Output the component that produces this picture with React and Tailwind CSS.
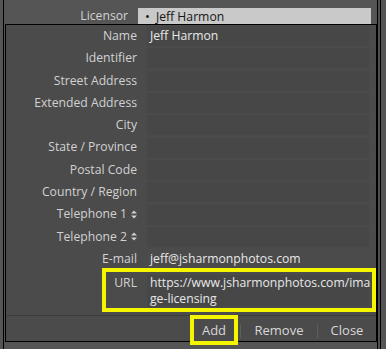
import React from 'react';

const rows = [
  { label: 'Name', value: 'Jeff Harmon' },
  { label: 'Identifier' },
  { label: 'Street Address' },
  { label: 'Extended Address' },
  { label: 'City' },
  { label: 'State / Province' },
  { label: 'Postal Code' },
  { label: 'Country / Region' },
  { label: 'Telephone 1', sort: true },
  { label: 'Telephone 2', sort: true },
  { label: 'E-mail', value: 'jeff@jsharmonphotos.com', plain: true },
];

function SortArrows() {
  return (
    <svg width="6" height="9" viewBox="0 0 6 9" className="ml-[4px] inline-block">
      <path d="M0 3.5 L3 0.5 L6 3.5 Z" fill="#cfcfcf" />
      <path d="M0 5.5 L3 8.5 L6 5.5 Z" fill="#cfcfcf" />
    </svg>
  );
}

function Row({ label, value, sort, plain }) {
  return (
    <div className="flex h-[22.3px] items-center">
      <div className="w-[131px] flex items-center justify-end text-[#d2d2d2]">
        {label}
        {sort && <SortArrows />}
      </div>
      <div
        className={
          'ml-[10px] w-[222px] h-[20px] flex items-center pl-[3px] text-[#e8e8e8] ' +
          (plain ? '' : 'bg-[#474747]')
        }
      >
        {value}
      </div>
    </div>
  );
}

export default function App() {
  return (
    <div
      className="w-[386px] h-[349px] bg-[#555555] flex text-[12.2px] overflow-hidden"
      style={{ fontFamily: '"Open Sans", "Noto Sans", Arial, sans-serif' }}
    >
      <div className="w-[3px]" />
      <div className="w-[1px] bg-black" />
      <div className="w-[373px] flex flex-col">
        <div className="h-[20px] mt-[4px] flex items-start pt-[4px]">
          <div className="w-[124px] text-right text-[#d2d2d2] leading-[15px]">Licensor</div>
          <div className="ml-[10px] w-[233px] h-[16px] bg-[#c9c9c9] flex items-center text-[#161616] leading-[15px]">
            <span className="ml-[7px] text-[13px]">•</span>
            <span className="ml-[6px]">Jeff Harmon</span>
          </div>
        </div>
        <div className="ml-[1px] h-[318px] border border-black bg-[#4b4b4b] flex flex-col">
          <div>
            {rows.map((r) => (
              <Row key={r.label} {...r} />
            ))}
          </div>
          <div className="ml-[96px] w-[274px] mt-[-2px] border-[4px] border-[#f5f500] flex pt-[3px] pb-[1px] bg-[#4b4b4b]">
            <div className="w-[31px] text-right text-[#d2d2d2] leading-[16px]">URL</div>
            <div className="ml-[10px] w-[222px] bg-[#474747] pl-[3px] text-[#e8e8e8] leading-[16px]">
              https://www.jsharmonphotos.com/ima
              <br />
              ge-licensing
            </div>
          </div>
          <div className="mt-[3px] border-t border-[#3c3c3c] flex-1 flex items-start">
            <div className="ml-[184px] mt-[-1px] w-[48px] h-[30px] border-[4px] border-[#f5f500] flex items-center justify-center text-[#d8d8d8] text-[13px]">
              Add
            </div>
            <div className="ml-[2px] mt-[8px] w-px h-[14px] bg-[#5e5e5e]" />
            <div className="w-[76px] h-[28px] flex items-center justify-center text-[#d8d8d8] text-[13px]">Remove</div>
            <div className="mt-[8px] w-px h-[14px] bg-[#5e5e5e]" />
            <div className="w-[58px] h-[28px] flex items-center justify-center text-[#d8d8d8] text-[13px]">Close</div>
          </div>
        </div>
        <div className="flex-1" />
      </div>
      <div className="w-[1px] bg-black" />
      <div className="w-[2px] bg-[#4f4f4f]" />
      <div className="w-[1px] bg-black" />
      <div className="flex-1" />
    </div>
  );
}
